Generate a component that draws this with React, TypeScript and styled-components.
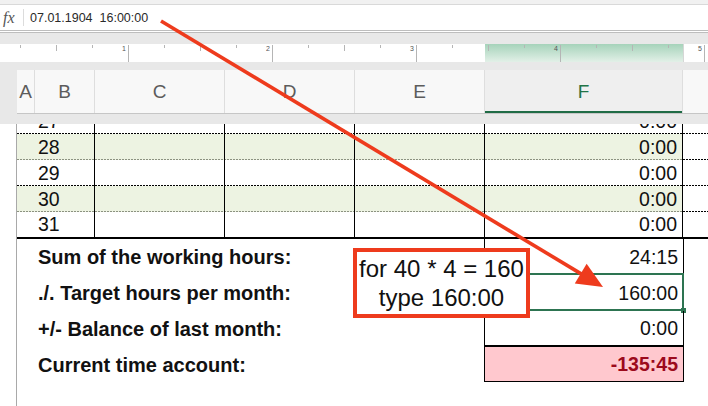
import React from "react";
import styled, { createGlobalStyle } from "styled-components";

const GlobalStyle = createGlobalStyle`
  html, body { margin: 0; padding: 0; background: #fff; }
  body { font-family: "Liberation Sans", Arial, Helvetica, sans-serif; }
  * { box-sizing: border-box; }
`;

const SHEET_COLS = "78px 130px 130px 130px 198px 1fr";
const HEAD_COLS = "18px 60px 130px 130px 130px 198px 1fr";
const RED = "#ee3b1d";
const GREEN = "#217346";

const Page = styled.div`
  position: relative;
  width: 708px;
  height: 406px;
  overflow: hidden;
  display: flex;
  flex-direction: column;
  background: #fff;
`;

const TopStrip = styled.div`
  height: 5px;
  background: #f1f1f1;
  border-bottom: 1px solid #d9d9d9;
`;

const FormulaBar = styled.div`
  height: 28px;
  display: flex;
  align-items: center;
  background: #fff;
  border-bottom: 3px double #bdbdbd;
`;

const Fx = styled.div`
  width: 24px;
  height: 17px;
  padding-left: 3px;
  display: flex;
  align-items: center;
  border-right: 1px solid #dcdcdc;
  font-family: "Liberation Serif", "Times New Roman", serif;
  font-style: italic;
  font-size: 16px;
  color: #555;
`;

const FormulaText = styled.div`
  padding-left: 6px;
  font-size: 12.5px;
  color: #2a2a2a;
  white-space: pre;
`;

const Chrome = styled.div`
  background: #e8e8e8;
  padding: 11px 0 10px;
`;

const RulerBar = styled.div`
  height: 18px;
  background: #fff;
`;

const HeaderRow = styled.div`
  margin: 8px 0 0 17px;
  height: 44px;
  display: grid;
  grid-template-columns: ${HEAD_COLS};
  background: #f8f8f8;
  border-bottom: 1px solid #c6c6c6;
`;

const HeaderCell = styled.div<{ $active?: boolean }>`
  display: flex;
  align-items: center;
  justify-content: center;
  border-right: 1px solid #dedede;
  font-size: 19px;
  color: ${(p) => (p.$active ? GREEN : "#5c5c5c")};
  background: ${(p) => (p.$active ? "#efefef" : "transparent")};
  box-shadow: ${(p) => (p.$active ? `inset 0 -2px 0 #1f6b45` : "none")};
  &:last-child { border-right: none; }
`;

const Sheet = styled.div`
  position: relative;
  flex: 1;
  margin-left: 16px;
  border-left: 1px solid #a9a9a9;
  overflow: hidden;
`;

const DataRow = styled.div<{ $last?: boolean; $first?: boolean }>`
  display: grid;
  grid-template-columns: ${SHEET_COLS};
  height: ${(p) => (p.$last ? "27px" : "26px")};
  margin-top: ${(p) => (p.$first ? "-16px" : "0")};
  border-bottom: ${(p) => (p.$last ? "2px solid #000" : "none")};
  background-image: ${(p) =>
    p.$last ? "none" : "linear-gradient(to right, #000 0 2px, transparent 2px 3px)"};
  background-size: 3px 1px;
  background-repeat: repeat-x;
  background-position: left bottom;
`;

const Cell = styled.div<{ $tint?: boolean; $right?: boolean; $edge?: boolean }>`
  display: flex;
  align-items: center;
  justify-content: ${(p) => (p.$right ? "flex-end" : "flex-start")};
  padding: 0 5px 0 ${(p) => (p.$right ? "5px" : "21px")};
  border-right: ${(p) => (p.$edge ? "none" : "1px solid #000")};
  background-color: ${(p) => (p.$tint ? "rgba(226, 236, 208, 0.62)" : "transparent")};
  font-size: 19.5px;
  color: #111;
  white-space: nowrap;
`;

const Summary = styled.div`
  display: flex;
  flex-direction: column;
`;

const SummaryRow = styled.div`
  display: grid;
  grid-template-columns: 467px 200px 1fr;
  height: 36px;
`;

const Label = styled.div`
  display: flex;
  align-items: center;
  padding-left: 21px;
  font-size: 20px;
  font-weight: bold;
  color: #111;
  white-space: nowrap;
`;

const Value = styled.div<{ $sep?: boolean; $alert?: boolean }>`
  position: relative;
  display: flex;
  align-items: center;
  justify-content: flex-end;
  padding-right: 5px;
  border-left: 1px solid #000;
  border-right: 1px solid #000;
  border-bottom: ${(p) => (p.$sep ? "2px solid #000" : p.$alert ? "1px solid #000" : "none")};
  height: ${(p) => (p.$alert ? "35px" : "36px")};
  background: ${(p) => (p.$alert ? "#ffc8ce" : "transparent")};
  color: ${(p) => (p.$alert ? "#9c0a1c" : "#111")};
  font-weight: ${(p) => (p.$alert ? "bold" : "normal")};
  font-size: 19.5px;
`;

const Selection = styled.div`
  position: absolute;
  top: -2px;
  bottom: 0;
  left: -1px;
  right: -1px;
  border: 2px solid #2d7451;
  pointer-events: none;
`;

const Handle = styled.div`
  position: absolute;
  right: -4px;
  bottom: -4px;
  width: 5px;
  height: 5px;
  background: #2d7451;
`;

const Callout = styled.div`
  position: absolute;
  left: 353px;
  top: 248px;
  width: 177px;
  height: 70px;
  border: 4px solid ${RED};
  background: #fff;
  display: flex;
  flex-direction: column;
  align-items: center;
  justify-content: center;
  font-size: 24px;
  line-height: 29px;
  color: #111;
  white-space: nowrap;
`;

const Overlay = styled.svg`
  position: absolute;
  left: 0;
  top: 0;
  pointer-events: none;
`;

const Ruler: React.FC = () => {
  const ticks = [];
  for (let i = 0; 20 + 36 * i < 708; i++) {
    const x = 20 + 36 * i;
    const kind = i % 4 === 3 ? "major" : i % 4 === 1 ? "mid" : "minor";
    ticks.push({ x, kind, n: (i + 1) / 4 });
  }
  return (
    <RulerBar>
      <svg width="708" height="18" viewBox="0 0 708 18">
        <defs>
          <linearGradient id="sel" x1="0" y1="0" x2="0" y2="1">
            <stop offset="0" stopColor="#a6d3ba" />
            <stop offset="1" stopColor="#e2f0e7" />
          </linearGradient>
        </defs>
        <rect x="485" y="0" width="198" height="18" fill="url(#sel)" />
        <line x1="683.5" y1="0" x2="683.5" y2="18" stroke="#d6d6d6" />
        {ticks.map((t) =>
          t.kind === "major" ? (
            <g key={t.x}>
              <line x1={t.x + 0.5} y1="1" x2={t.x + 0.5} y2="18" stroke="#b5b5b5" />
              <text x={t.x - 2} y="7" fontSize="7" textAnchor="end" fill="#555"
                fontFamily="Liberation Sans, Arial, sans-serif">
                {t.n}
              </text>
            </g>
          ) : (
            <line key={t.x} x1={t.x + 0.5} y1="1" x2={t.x + 0.5}
              y2={t.kind === "mid" ? 7 : 4} stroke="#b5b5b5" />
          )
        )}
      </svg>
    </RulerBar>
  );
};

const Arrow: React.FC = () => {
  const sx = 161, sy = 21, tx = 603, ty = 287;
  const dx = tx - sx, dy = ty - sy;
  const len = Math.hypot(dx, dy);
  const ux = dx / len, uy = dy / len;
  const bx = tx - ux * 26, by = ty - uy * 26;
  const px = -uy * 11.5, py = ux * 11.5;
  return (
    <Overlay width="708" height="406" viewBox="0 0 708 406">
      <line x1={sx} y1={sy} x2={bx + ux * 2} y2={by + uy * 2} stroke={RED} strokeWidth="3.6" />
      <polygon
        points={`${tx},${ty} ${bx + px},${by + py} ${bx - px},${by - py}`}
        fill={RED}
      />
    </Overlay>
  );
};

const rows = [
  { n: 27, tint: false },
  { n: 28, tint: true },
  { n: 29, tint: false },
  { n: 30, tint: true },
  { n: 31, tint: false },
];

const heads = ["A", "B", "C", "D", "E", "F", ""];

const App: React.FC = () => {
  return (
    <>
      <GlobalStyle />
      <Page>
        <TopStrip />
        <FormulaBar>
          <Fx>fx</Fx>
          <FormulaText>{"07.01.1904  16:00:00"}</FormulaText>
        </FormulaBar>
        <Chrome>
          <Ruler />
          <HeaderRow>
            {heads.map((h, i) => (
              <HeaderCell key={i} $active={h === "F"}>{h}</HeaderCell>
            ))}
          </HeaderRow>
        </Chrome>
        <Sheet>
          {rows.map((r, i) => (
            <DataRow key={r.n} $first={i === 0} $last={i === rows.length - 1}>
              <Cell $tint={r.tint}>{r.n}</Cell>
              <Cell $tint={r.tint} />
              <Cell $tint={r.tint} />
              <Cell $tint={r.tint} />
              <Cell $tint={r.tint} $right>0:00</Cell>
              <Cell $edge />
            </DataRow>
          ))}
          <Summary>
            <SummaryRow>
              <Label>Sum of the working hours:</Label>
              <Value>24:15</Value>
            </SummaryRow>
            <SummaryRow>
              <Label>./. Target hours per month:</Label>
              <Value>
                160:00
                <Selection>
                  <Handle />
                </Selection>
              </Value>
            </SummaryRow>
            <SummaryRow>
              <Label>+/- Balance of last month:</Label>
              <Value $sep>0:00</Value>
            </SummaryRow>
            <SummaryRow>
              <Label>Current time account:</Label>
              <Value $alert>-135:45</Value>
            </SummaryRow>
          </Summary>
        </Sheet>
        <Callout>
          <span>for 40 * 4 = 160</span>
          <span>type 160:00</span>
        </Callout>
        <Arrow />
      </Page>
    </>
  );
};

export default App;
